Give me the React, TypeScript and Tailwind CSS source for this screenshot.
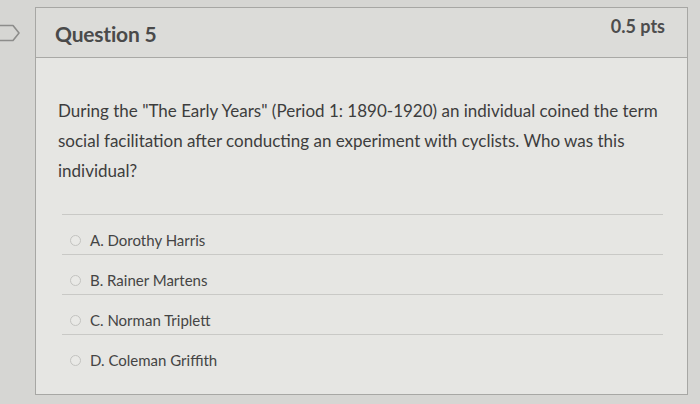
import React from 'react';

const answers = ['A. Dorothy Harris', 'B. Rainer Martens', 'C. Norman Triplett', 'D. Coleman Griffith'];

export default function App() {
  return (
    <div
      className="relative w-[700px] h-[404px] overflow-hidden bg-[#d6d6d3] pl-[35px] pt-[7px] text-[#3f3f3f]"
      style={{ fontFamily: 'Lato, "Open Sans", sans-serif' }}
    >
      {/* bookmark flag */}
      <svg className="absolute left-[-4px] top-[24px]" width="26" height="18" viewBox="0 0 26 18">
        <path d="M1 1.5 H17 L23 9 L17 16.5 H1 Z" fill="none" stroke="#8d8d8b" strokeWidth="1.6" strokeLinejoin="round" />
      </svg>

      <div className="w-[653px] h-[388px] border border-[#a7a7a4] bg-[#e6e6e3] flex flex-col">
        {/* Header */}
        <div className="h-[50px] shrink-0 bg-[#dcdcd9] border-b border-[#a9a9a6] flex items-start justify-between pl-[19px] pr-[22px]">
          <h2 className="mt-[10px] text-[21px] font-bold tracking-[-0.2px] text-[#4a4a4a]">Question 5</h2>
          <span className="mt-[5px] text-[18px] font-bold text-[#4d4d4d]">0.5 pts</span>
        </div>

        {/* Body */}
        <div className="pl-[22px] pr-[24px] pt-[38px]">
          <p className="text-[17px] leading-[30px] text-[#3d3d3d] w-[605px]">
            During the "The Early Years" (Period 1: 1890-1920) an individual coined the term social facilitation after conducting an experiment with cyclists. Who was this individual?
          </p>

          <div className="mt-[28px] ml-[4px]">
            {answers.map(a => (
              <div key={a} className="h-[40px] border-t border-[#c9c9c6] flex items-center pt-[11px] pl-[8px] gap-[9px]">
                <span className="w-[11px] h-[11px] rounded-full border border-[#c3c3c0] bg-[#e9e9e6]" />
                <span className="text-[15px] text-[#444444]">{a}</span>
              </div>
            ))}
          </div>
        </div>
      </div>
    </div>
  );
}
